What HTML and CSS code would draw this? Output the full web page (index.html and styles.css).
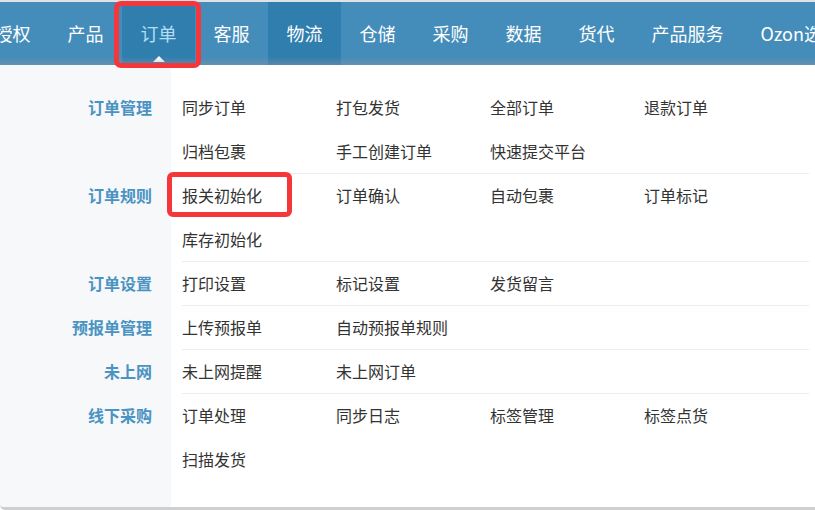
FILE: index.html
```html
<!DOCTYPE html>
<html lang="zh-CN">
<head>
    <meta charset="UTF-8">
    <title>订单</title>
    <link rel="stylesheet" href="styles.css">
</head>
<body>
    <div class="topline"></div>
    <nav class="menu">
        <ul class="menu-list">
            <li class="menu-item">授权</li>
            <li class="menu-item">产品</li>
            <li class="menu-item active">订单</li>
            <li class="menu-item">客服</li>
            <li class="menu-item hover">物流</li>
            <li class="menu-item">仓储</li>
            <li class="menu-item">采购</li>
            <li class="menu-item">数据</li>
            <li class="menu-item">货代</li>
            <li class="menu-item">产品服务</li>
            <li class="menu-item">Ozon选品</li>
        </ul>
    </nav>

    <div class="dropdown">
        <div class="group-title">订单管理</div>
        <div class="items">
            <a>同步订单</a><a>打包发货</a><a>全部订单</a><a>退款订单</a>
            <a>归档包裹</a><a>手工创建订单</a><a>快速提交平台</a>
        </div>

        <div class="group-title">订单规则</div>
        <div class="items sep">
            <a>报关初始化</a><a>订单确认</a><a>自动包裹</a><a>订单标记</a>
            <a>库存初始化</a>
        </div>

        <div class="group-title">订单设置</div>
        <div class="items sep">
            <a>打印设置</a><a>标记设置</a><a>发货留言</a>
        </div>

        <div class="group-title">预报单管理</div>
        <div class="items sep">
            <a>上传预报单</a><a>自动预报单规则</a>
        </div>

        <div class="group-title">未上网</div>
        <div class="items sep">
            <a>未上网提醒</a><a>未上网订单</a>
        </div>

        <div class="group-title">线下采购</div>
        <div class="items sep">
            <a>订单处理</a><a>同步日志</a><a>标签管理</a><a>标签点货</a>
            <a>扫描发货</a>
        </div>
    </div>

    <!-- red marks drawn over the screenshot -->
    <div class="mark mark-tab"></div>
    <div class="mark mark-item"></div>
</body>
</html>
```

FILE: styles.css
```css
body {
    margin: 0;
    width: 815px;
    height: 510px;
    overflow: hidden;
    position: relative;
    background: #fff;
    font-family: "Microsoft YaHei", "Noto Sans CJK SC", "Noto Sans", sans-serif;
    color: #333;
}

.topline {
    height: 2px;
    background: #dfe3e6;
}

.menu {
    position: relative;
    height: 63px;
    background: #448dba;
}

.menu::after {
    content: "";
    position: absolute;
    left: 0;
    right: 0;
    bottom: 0;
    height: 8px;
    background: linear-gradient(to bottom, rgba(140, 150, 160, 0), rgba(140, 150, 160, 0.45));
}

.menu-list {
    display: flex;
    height: 100%;
    margin: 0 0 0 -24px;
    padding: 0;
    list-style: none;
    white-space: nowrap;
}

.menu-item {
    position: relative;
    padding: 0 18.5px 1px;
    line-height: 62px;
    font-size: 18px;
    color: #fff;
}

.menu-item.hover {
    background: #307eae;
}

.menu-item.active {
    background: #307eae;
    color: #b3def5;
}

.menu-item.active::before {
    content: "";
    position: absolute;
    left: 50%;
    bottom: 3px;
    margin-left: -6px;
    border: 6px solid transparent;
    border-top: 0;
    border-bottom-color: #fff;
}

.dropdown {
    display: grid;
    grid-template-columns: 171px 1fr;
    padding: 20px 0 26px;
    background: linear-gradient(to right, #f6f8fa 171px, #fff 171px);
    border-bottom: 3px solid #cfcfcf;
    border-bottom-left-radius: 5px;
    font-size: 16px;
}

.group-title {
    padding-right: 19px;
    line-height: 44px;
    text-align: right;
    font-weight: bold;
    color: #4a93c2;
}

.items {
    display: grid;
    grid-template-columns: repeat(4, 154px);
    margin: 0 6px 0 11px;
    line-height: 44px;
}

.items.sep {
    background: linear-gradient(#ececec, #ececec) top / 100% 1px no-repeat;
}

.items a {
    color: #333;
    white-space: nowrap;
}

.mark {
    position: absolute;
    box-sizing: border-box;
    border: 5px solid #f5363b;
}

.mark-tab {
    left: 114px;
    top: 1px;
    width: 87px;
    height: 67px;
    border-radius: 7px;
}

.mark-item {
    left: 167px;
    top: 172px;
    width: 125px;
    height: 45px;
    border-radius: 6px;
}
```
